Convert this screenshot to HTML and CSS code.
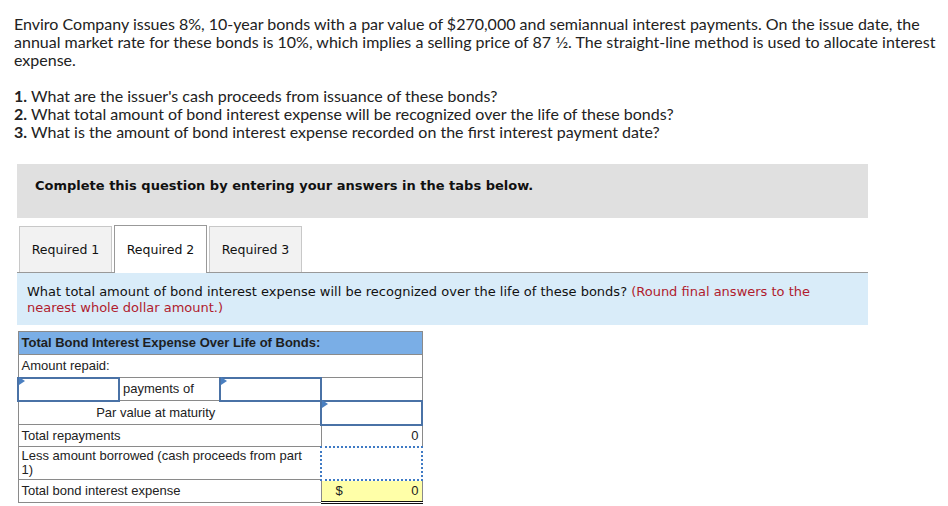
FILE: index.html
```html
<!DOCTYPE html>
<html>
<head>
<meta charset="utf-8">
<link rel="stylesheet" href="styles.css">
</head>
<body>
<div class="page">
  <p class="intro">Enviro Company issues 8%, 10-year bonds with a par value of $270,000 and semiannual interest payments. On the issue date, the annual market rate for these bonds is 10%, which implies a selling price of 87 1⁄2. The straight-line method is used to allocate interest expense.</p>
  <ol class="questions">
    <li><b>1.</b> What are the issuer's cash proceeds from issuance of these bonds?</li>
    <li><b>2.</b> What total amount of bond interest expense will be recognized over the life of these bonds?</li>
    <li><b>3.</b> What is the amount of bond interest expense recorded on the first interest payment date?</li>
  </ol>
  <div class="banner">Complete this question by entering your answers in the tabs below.</div>
  <div class="tabs">
    <div class="tab">Required 1</div>
    <div class="tab active">Required 2</div>
    <div class="tab">Required 3</div>
  </div>
  <div class="prompt">What total amount of bond interest expense will be recognized over the life of these bonds? <span class="note">(Round final answers to the nearest whole dollar amount.)</span></div>
  <table class="sheet">
    <colgroup><col class="c1"><col class="c2"><col class="c3"><col class="c4"></colgroup>
    <tr class="head"><td colspan="4">Total Bond Interest Expense Over Life of Bonds:</td></tr>
    <tr class="r23"><td colspan="4">Amount repaid:</td></tr>
    <tr class="r23"><td class="inp"><span class="flag"></span></td><td>payments of</td><td class="inp"><span class="flag"></span></td><td></td></tr>
    <tr class="r24"><td colspan="3" class="center">Par value at maturity</td><td class="inp"><span class="flag"></span></td></tr>
    <tr class="r22"><td colspan="3">Total repayments</td><td class="num">0</td></tr>
    <tr class="tall"><td colspan="3" class="wrapcell">Less amount borrowed (cash proceeds from part 1)</td><td class="dotted"></td></tr>
    <tr class="r23"><td colspan="3">Total bond interest expense</td><td class="total"><span class="cur">$</span><span>0</span></td></tr>
  </table>
</div>
</body>
</html>
```
FILE: styles.css
```css
html, body { margin: 0; padding: 0; background: #fff; }
.page { padding: 15px 10px 0 14px; width: 924px; }
.intro {
  margin: 0;
  font-family: Lato, "Liberation Sans", sans-serif;
  font-size: 16px;
  line-height: 18px;
  color: #222;
}
.questions {
  list-style: none;
  margin: 18px 0 0 0;
  padding: 0;
  font-family: Lato, "Liberation Sans", sans-serif;
  font-size: 16px;
  line-height: 18px;
  color: #222;
}
.questions b { font-weight: 700; }
.banner {
  margin: 23px 0 0 3px;
  width: 851px;
  height: 54px;
  box-sizing: border-box;
  padding: 14px 0 0 18px;
  background: #e0e0e0;
  font-family: Verdana, "DejaVu Sans", sans-serif;
  font-weight: bold;
  font-size: 13px;
  line-height: 16px;
  color: #111;
}
.tabs {
  display: flex;
  gap: 2px;
  margin: 8px 0 0 3px;
  width: 851px;
  padding-left: 2px;
  box-sizing: border-box;
  border-bottom: 1px solid #999;
  height: 47px;
  align-items: flex-end;
}
.tab {
  width: 93px;
  height: 46px;
  box-sizing: border-box;
  border: 1px solid #c8c8c8;
  border-bottom: none;
  background: #f2f2f2;
  font-family: Verdana, "DejaVu Sans", sans-serif;
  font-size: 12.5px;
  display: flex;
  align-items: center;
  justify-content: center;
  color: #111;
}
.tab.active {
  background: #fff;
  border-color: #999;
  margin-bottom: -1px;
  height: 48px;
}
.prompt {
  margin: 0 0 0 3px;
  width: 851px;
  height: 52px;
  box-sizing: border-box;
  padding: 11px 10px 0 10px;
  background: #d9ecf9;
  font-family: Verdana, "DejaVu Sans", sans-serif;
  font-size: 13px;
  line-height: 16px;
  color: #111;
}
.note { color: #b01c2e; }
.sheet {
  margin: 6px 0 0 3px;
  border-collapse: collapse;
  table-layout: fixed;
  width: 404px;
  font-family: Arial, "Liberation Sans", sans-serif;
  font-size: 13px;
  color: #222;
}
.c1 { width: 101px; }
.c2 { width: 101px; }
.c3 { width: 101px; }
.c4 { width: 101px; }
.sheet td {
  border: 1px solid #8a8a8a;
  padding: 0 3px;
  line-height: 14px;
  vertical-align: middle;
  position: relative;
}
.sheet tr.head { height: 23px; }
.sheet tr.r23 { height: 23px; }
.sheet tr.r24 { height: 24px; }
.sheet tr.r22 { height: 22px; }
.sheet tr.tall { height: 33px; }
.sheet tr.head td {
  background: #7aaee6;
  color: #1e1e1e;
  font-weight: bold;
}
.sheet tr.tall td { vertical-align: top; padding-top: 2px; }
.sheet td.wrapcell { padding-right: 16px; }
.sheet td.center { text-align: center; padding-right: 30px; }
.sheet td.num { text-align: right; }
.sheet td.inp {
  border: 2px solid #4a72a6;
}
.flag {
  position: absolute;
  left: 0;
  top: 0;
  width: 0;
  height: 0;
  border-top: 4px solid transparent;
  border-bottom: 4px solid transparent;
  border-left: 6px solid #4a7fc0;
  transform: translateY(-2px);
}
.sheet td.dotted { border: 2px dotted #3f7ac4; }
.sheet td.total {
  background: #ffffa8;
  border-bottom: 3px double #111;
}
.total .cur { float: left; padding-left: 11px; }
.total span:last-child { float: right; }
```
